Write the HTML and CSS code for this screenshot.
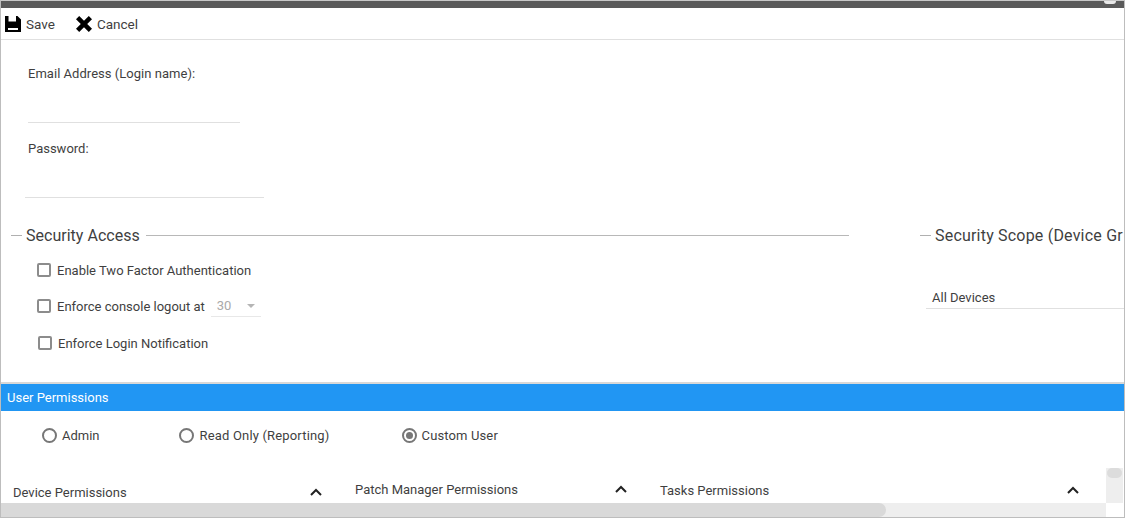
FILE: index.html
```html
<!DOCTYPE html>
<html lang="en">
<head>
<meta charset="utf-8">
<title>User</title>
<link rel="stylesheet" href="styles.css">
</head>
<body>
<div class="frame">
  <div class="titlebar"><span class="title-notch"></span></div>
  <div class="toolbar">
    <span class="tool tool-save">
      <svg class="icon-save" viewBox="0 0 16 16" width="16" height="16"><path fill="#000" fill-rule="evenodd" d="M0 0h3.500v5.500h7.500V0h1.500L16 3.500V16H0zM3 12v2h10v-2z"/></svg>
      Save
    </span>
    <span class="tool tool-cancel">
      <svg class="icon-cancel" viewBox="0 0 16 16" width="16" height="16"><path fill="#000" d="M3.200 0 8 4.800 12.800 0 16 3.200 11.200 8 16 12.800 12.800 16 8 11.200 3.200 16 0 12.800 4.800 8 0 3.200z"/></svg>
      Cancel
    </span>
  </div>
  <div class="credentials">
    <div class="label label-email">Email Address (Login name):</div>
    <div class="input-line line-email"></div>
    <div class="label label-password">Password:</div>
    <div class="input-line line-password"></div>
  </div>
  <div class="sections">
    <section class="access">
      <div class="legend"><span class="dash"></span><span class="legend-text">Security Access</span><span class="rule"></span></div>
      <div class="check check-first"><span class="box"></span>Enable Two Factor Authentication</div>
      <div class="check check-second"><span class="box"></span>Enforce console logout at
        <span class="select"><span>30</span><span class="caret"></span></span>
      </div>
      <div class="check check-third"><span class="box"></span>Enforce Login Notification</div>
    </section>
    <section class="scope">
      <div class="legend"><span class="dash"></span><span class="legend-text">Security Scope (Device Gr</span></div>
      <div class="scope-value">All Devices</div>
    </section>
  </div>
  <div class="band">User Permissions</div>
  <div class="radios">
    <span class="radio radio-admin"><span class="dot"></span>Admin</span>
    <span class="radio radio-read"><span class="dot"></span>Read Only (Reporting)</span>
    <span class="radio radio-custom"><span class="dot dot-on"></span>Custom User</span>
  </div>
  <div class="perms">
    <div class="perm perm-device"><span>Device Permissions</span><svg class="chev" viewBox="0 0 12 8" width="12" height="8"><path d="M1 7l5-5 5 5" fill="none" stroke="#222" stroke-width="2"/></svg></div>
    <div class="perm perm-patch"><span>Patch Manager Permissions</span><svg class="chev" viewBox="0 0 12 8" width="12" height="8"><path d="M1 7l5-5 5 5" fill="none" stroke="#222" stroke-width="2"/></svg></div>
    <div class="perm perm-tasks"><span>Tasks Permissions</span><svg class="chev" viewBox="0 0 12 8" width="12" height="8"><path d="M1 7l5-5 5 5" fill="none" stroke="#222" stroke-width="2"/></svg></div>
  </div>
  <div class="vscroll"><span class="vthumb"></span></div>
  <div class="hscroll"><span class="hthumb"></span></div>
</div>
</body>
</html>
```
FILE: styles.css
```css
* { box-sizing: border-box; }
html, body { margin: 0; padding: 0; background: #fff; }
body { width: 1125px; height: 518px; overflow: hidden; font-family: Roboto, "Liberation Sans", sans-serif; font-size: 13px; color: #3f3f3f; }
.frame { position: relative; width: 1125px; height: 518px; overflow: hidden; border-left: 1px solid #bdbdbd; border-right: 1px solid #bdbdbd; border-bottom: 1px solid #bdbdbd; border-top: 1px solid #c8c8c8; }
.titlebar { position: relative; height: 7px; background: #5a5a5a; }
.title-notch { position: absolute; right: 8px; top: 0; width: 12px; height: 3px; background: #e8e8e8; border-radius: 0 0 6px 6px; }
.toolbar { display: flex; align-items: center; height: 32px; border-bottom: 1px solid #e0e0e0; padding: 1px 0 0 4px; font-size: 13.5px; }
.tool { display: inline-flex; align-items: center; gap: 5px; }
.tool-cancel { margin-left: 21px; }
.credentials { padding-left: 27px; }
.label-email { margin-top: 26px; line-height: 16px; letter-spacing: .03px; }
.line-email { width: 212px; height: 1px; background: #e0e0e0; margin-top: 40px; }
.label-password { margin-top: 18px; line-height: 16px; }
.input-line.line-password { width: 239px; height: 1px; background: #e0e0e0; margin-top: 40px; margin-left: -3px; }
.sections { display: flex; height: 184px; }
.access { width: 919px; padding-left: 10px; flex: none; }
.legend { display: flex; align-items: center; height: 20px; margin-top: 27px; }
.dash { width: 11px; height: 1px; background: #b0b0b0; flex: none; }
.legend-text { font-size: 16px; padding: 0 5px 0 4px; white-space: nowrap; letter-spacing: .02px; }
.rule { width: 703px; height: 1px; background: #b8b8b8; margin-left: 1px; }
.check { display: flex; align-items: center; white-space: nowrap; height: 20px; margin-left: 26px; }
.box { width: 14px; height: 14px; border: 2px solid #8c8c8c; border-radius: 2px; margin-right: 6px; flex: none; }
.check-first { margin-top: 15px; }
.check-second { margin-top: 16px; }
.check-third { margin-top: 17px; margin-left: 27px; }
.select { display: inline-flex; align-items: center; justify-content: space-between; width: 50px; height: 22px; margin-left: 6px; padding: 0 6px 0 6px; color: #aaa; border-bottom: 1px solid #e8e8e8; }
.caret { width: 0; height: 0; border-left: 4px solid transparent; border-right: 4px solid transparent; border-top: 4px solid #b5b5b5; }
.scope { flex: 1; min-width: 0; overflow: hidden; }
.scope .legend-text { letter-spacing: .2px; }
.scope-value { margin: 42px 0 0 6px; height: 22px; line-height: 21px; padding-left: 6px; border-bottom: 1px solid #e0e0e0; white-space: nowrap; }
.band { height: 29px; border-top: 2px solid #d8d8d8; background: #2196f3; color: #fff; line-height: 28px; padding-left: 6px; background-clip: padding-box; }
.radios { position: relative; display: flex; align-items: center; height: 48px; }
.radio { display: inline-flex; align-items: center; white-space: nowrap; }
.dot { position: relative; width: 15px; height: 15px; border: 2px solid #777; border-radius: 50%; margin-right: 5px; flex: none; }
.dot-on::after { content: ""; position: absolute; left: 2px; top: 2px; width: 7px; height: 7px; border-radius: 50%; background: #777; }
.radio-admin { margin-left: 41px; }
.radio-read { margin-left: 79px; letter-spacing: .17px; }
.radio-read .dot { margin-right: 6px; }
.radio-custom { margin-left: 72px; letter-spacing: .13px; }
.perms { display: flex; align-items: flex-start; }
.perm { display: flex; align-items: center; justify-content: space-between; flex: none; height: 18px; }
.perm-device { width: 309px; margin: 24px 0 0 12px; }
.perm-patch { width: 272px; margin: 21px 0 0 33px; }
.perm-tasks { width: 419px; margin: 22px 0 0 33px; }
.vscroll { position: absolute; left: 1105px; top: 467px; width: 17px; height: 35px; background: #eeeeee; }
.vthumb { display: block; width: 15px; height: 10px; margin: 0 1px; background: #dcdcdc; border-radius: 5px; }
.hscroll { position: absolute; left: 0; bottom: 0; width: 1105px; height: 14px; background: #eeeeee; }
.hthumb { display: block; width: 885px; height: 14px; background: #d9d9d9; border-radius: 0 7px 7px 0; }
```
